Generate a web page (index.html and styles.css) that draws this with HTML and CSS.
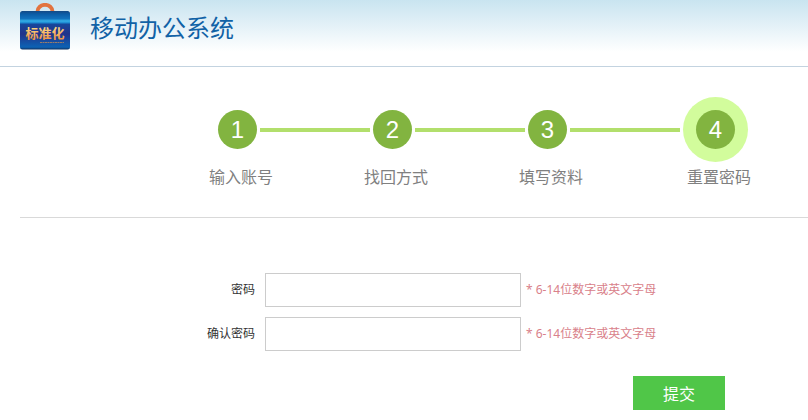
FILE: index.html
```html
<!DOCTYPE html>
<html lang="zh-CN">
<head>
<meta charset="utf-8">
<title>移动办公系统</title>
<link rel="stylesheet" href="styles.css">
</head>
<body>
<header class="header">
  <svg class="logo" viewBox="0 0 50 48" role="img" aria-label="标准化">
    <defs>
      <linearGradient id="case" x1="0" y1="0" x2="0" y2="1">
        <stop offset="0" stop-color="#134a86"/>
        <stop offset="0.08" stop-color="#0b5ca6"/>
        <stop offset="0.2" stop-color="#1272bd"/>
        <stop offset="0.26" stop-color="#35b0e8"/>
        <stop offset="0.31" stop-color="#1b86cf"/>
        <stop offset="0.34" stop-color="#17479b"/>
        <stop offset="0.6" stop-color="#22338a"/>
        <stop offset="0.94" stop-color="#0c62b4"/>
        <stop offset="1" stop-color="#10305f"/>
      </linearGradient>
      <linearGradient id="gold" x1="0" y1="0" x2="0" y2="1">
        <stop offset="0" stop-color="#fff09a"/>
        <stop offset="1" stop-color="#ee8436"/>
      </linearGradient>
    </defs>
    <path d="M17.500 9v-.5a7.500 6.700 0 0 1 15 0v.5" fill="none" stroke="#e2733f" stroke-width="3.800"/>
    <rect x="0" y="8" width="50" height="38.500" rx="2.500" fill="url(#case)"/>
    <text class="logo-text" x="25" y="35" text-anchor="middle" fill="url(#gold)">标准化</text>
    <path d="M20 39.500h24" stroke="#c08a58" stroke-width="1" stroke-dasharray="2 .5" opacity=".75"/>
  </svg>
  <h1 class="title">移动办公系统</h1>
</header>
<main class="content">
  <ol class="steps">
    <li class="step"><span class="marker"><span class="number">1</span></span><span class="step-label">输入账号</span></li>
    <li class="connector" aria-hidden="true"></li>
    <li class="step"><span class="marker"><span class="number">2</span></span><span class="step-label">找回方式</span></li>
    <li class="connector" aria-hidden="true"></li>
    <li class="step"><span class="marker"><span class="number">3</span></span><span class="step-label">填写资料</span></li>
    <li class="connector" aria-hidden="true"></li>
    <li class="step step-current" aria-current="step"><span class="marker"><span class="number">4</span></span><span class="step-label">重置密码</span></li>
  </ol>
  <form class="form">
    <div class="field">
      <label class="field-label" for="password">密码</label>
      <input class="field-input" id="password" type="password" aria-describedby="password-hint">
      <span class="hint" id="password-hint">* 6-14位数字或英文字母</span>
    </div>
    <div class="field">
      <label class="field-label" for="confirm">确认密码</label>
      <input class="field-input" id="confirm" type="password" aria-describedby="confirm-hint">
      <span class="hint" id="confirm-hint">* 6-14位数字或英文字母</span>
    </div>
    <div class="actions"><button class="submit" type="submit">提交</button></div>
  </form>
</main>
</body>
</html>
```
FILE: styles.css
```css
* {
  box-sizing: border-box;
}

body {
  margin: 0;
  background: #fff;
  color: #333;
  font: 12px/20px "Noto Sans", "Noto Sans CJK SC", sans-serif;
}

.header {
  display: flex;
  align-items: flex-start;
  gap: 20px;
  padding: 3px 20px 15px;
  border-bottom: 1px solid #c3d3e0;
  background: linear-gradient(#c9e4f0, #fff 52px);
}

.logo {
  width: 50px;
  height: 48px;
}

.logo-text {
  font: bold 13px "Noto Sans CJK SC", sans-serif;
}

.title {
  margin: 0;
  color: #1162a6;
  font: 24px/48px "Noto Sans CJK SC", sans-serif;
}

.content {
  padding-left: 20px;
}

.steps {
  display: flex;
  align-items: flex-start;
  gap: 3px;
  margin: 0;
  padding: 30px 0 28px 198px;
  border-bottom: 1px solid #d9d9d9;
  list-style: none;
}

.step {
  display: flex;
  flex-direction: column;
  align-items: center;
  width: 39px;
}

.marker {
  display: flex;
  align-items: center;
  justify-content: center;
  width: 65px;
  height: 65px;
  border-radius: 50%;
}

.number {
  width: 39px;
  height: 39px;
  border-radius: 50%;
  background: #82b440;
  color: #fff;
  font: 24px/39px "Liberation Sans", sans-serif;
  text-align: center;
}

.step-label {
  margin-top: 2px;
  padding: 0 0 1px 7px;
  color: #808080;
  font: 16px/24px "Noto Sans CJK SC", sans-serif;
  white-space: nowrap;
}

.step-current {
  width: 65px;
}

.step-current .marker {
  background: #d2fc9c;
}

.connector {
  width: 110px;
  height: 4px;
  margin-top: 31px;
  background: #b2df6c;
}

.form {
  display: flex;
  flex-direction: column;
  gap: 10px;
  padding-top: 55px;
}

.field {
  display: flex;
  align-items: center;
}

.field-label {
  width: 235px;
  margin-right: 10px;
  text-align: right;
}

.field-input {
  width: 256px;
  height: 34px;
  margin: 0;
  padding: 0 8px;
  border: 1px solid #ccc;
  background: #fff;
  font: inherit;
}

.hint {
  margin-left: 5px;
  color: #d9818a;
}

.actions {
  padding: 15px 0 10px 613px;
}

.submit {
  width: 92px;
  height: 34px;
  padding: 0;
  border: 0;
  background: #50c648;
  color: #fff;
  font: 16px/34px "Noto Sans CJK SC", sans-serif;
}
```
